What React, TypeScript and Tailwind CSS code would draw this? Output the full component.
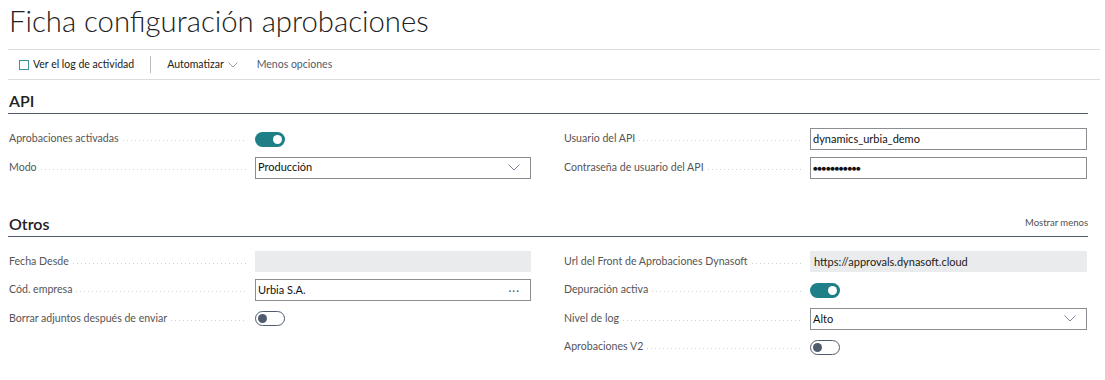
import React from "react"

const Leader = () => (
  <div className="flex-1 mx-1 h-px self-center mt-[3px] bg-[linear-gradient(to_right,#cfcfcf_1px,transparent_1px)] bg-[length:4px_1px] bg-repeat-x" />
)

const Row = ({ label, children }: { label: string; children: React.ReactNode }) => (
  <div className="flex items-center h-[28.4px]">
    <div className="w-[247px] flex items-center pl-px pr-1 text-[10.6px] text-[#555]">
      <span className="whitespace-nowrap">{label}</span>
      <Leader />
    </div>
    <div className="flex-1 flex items-center">{children}</div>
  </div>
)

const Toggle = ({ on }: { on: boolean }) =>
  on ? (
    <div className="w-[30px] h-[15px] rounded-full bg-[#1e7f87] flex items-center justify-end pr-[3px]">
      <div className="w-[9px] h-[9px] rounded-full bg-white" />
    </div>
  ) : (
    <div className="w-[30px] h-[15px] rounded-full border border-[#505c6d] flex items-center pl-[2px]">
      <div className="w-[9px] h-[9px] rounded-full bg-[#505c6d]" />
    </div>
  )

const Chevron = () => (
  <svg width="12" height="7" viewBox="0 0 12 7" fill="none">
    <path d="M0.5 0.5 L6 6 L11.5 0.5" stroke="#7b86a3" strokeWidth="1" />
  </svg>
)

const Input = ({ value, children }: { value: React.ReactNode; children?: React.ReactNode }) => (
  <div className="w-full h-[22px] border border-[#8a8d91] flex items-center justify-between pl-[2px] pr-[10px] text-[11px] text-[#111]">
    <span>{value}</span>
    {children}
  </div>
)

const ReadOnly = ({ value }: { value?: string }) => (
  <div className="w-full h-[21px] bg-[#eaebec] flex items-center pl-[4px] text-[11px] text-[#212121]">{value}</div>
)

const Section = ({ title, right, children }: { title: string; right?: string; children: React.ReactNode }) => (
  <div className="w-[1080px] ml-2">
    <div className="flex items-end justify-between h-[34px] pb-[1px] border-b-[1.5px] border-[#505c6d]">
      <span className="text-[16px] font-semibold text-[#212121] pl-px leading-[20px] pb-[1px]">{title}</span>
      {right && <span className="text-[9.5px] text-[#505050] pb-[5px]">{right}</span>}
    </div>
    <div className="grid grid-cols-[523px_524px] gap-x-[32px] pt-[11px]">{children}</div>
  </div>
)

export default function App() {
  return (
    <div className="w-[1105px] h-[380px] bg-white font-['Lato','Noto_Sans',sans-serif] text-[#212121] overflow-hidden">
      <div className="px-2">
        <h1 className="h-[49px] pl-px pt-[1px] text-[29.3px] font-light leading-[40px] text-[#212121]">
          Ficha configuración aprobaciones
        </h1>
        <div className="w-[1092px] h-[31px] border-t border-b border-[#dcdcdc] flex items-center text-[10.5px]">
          <div className="flex items-center pl-[11px] gap-[4px] text-[#212121]">
            <div className="w-[10px] h-[10px] border border-[#3a939b]" />
            <span>Ver el log de actividad</span>
          </div>
          <div className="w-px h-[17px] bg-[#bdbdbd] ml-[16px] mr-[16px]" />
          <div className="flex items-center gap-[4px] text-[#212121]">
            <span>Automatizar</span>
            <svg width="10" height="6" viewBox="0 0 10 6" fill="none">
              <path d="M0.5 0.5 L5 5 L9.5 0.5" stroke="#9aa0a6" strokeWidth="1" />
            </svg>
          </div>
          <span className="ml-[19px] text-[#505c6d]">Menos opciones</span>
        </div>
      </div>

      <Section title="API">
        <div>
          <Row label="Aprobaciones activadas">
            <Toggle on />
          </Row>
          <Row label="Modo">
            <Input value="Producción">
              <Chevron />
            </Input>
          </Row>
        </div>
        <div>
          <Row label="Usuario del API">
            <Input value="dynamics_urbia_demo" />
          </Row>
          <Row label="Contraseña de usuario del API">
            <Input value={<span className="text-[8px] tracking-[-0.5px]">●●●●●●●●●●●</span>} />
          </Row>
        </div>
      </Section>

      <div className="h-[21px]" />

      <Section title="Otros" right="Mostrar menos">
        <div>
          <Row label="Fecha Desde">
            <ReadOnly />
          </Row>
          <Row label="Cód. empresa">
            <Input value="Urbia S.A.">
              <span className="text-[11px] text-[#505c6d] tracking-[1px] leading-none">···</span>
            </Input>
          </Row>
          <Row label="Borrar adjuntos después de enviar">
            <Toggle on={false} />
          </Row>
        </div>
        <div>
          <Row label="Url del Front de Aprobaciones Dynasoft">
            <ReadOnly value="https://approvals.dynasoft.cloud" />
          </Row>
          <Row label="Depuración activa">
            <Toggle on />
          </Row>
          <Row label="Nivel de log">
            <Input value="Alto">
              <Chevron />
            </Input>
          </Row>
          <Row label="Aprobaciones V2">
            <Toggle on={false} />
          </Row>
        </div>
      </Section>
    </div>
  )
}
